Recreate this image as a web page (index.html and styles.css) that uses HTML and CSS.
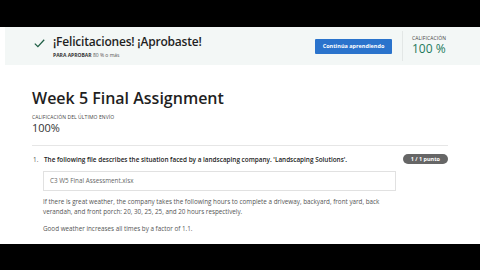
FILE: index.html
```html
<!DOCTYPE html>
<html lang="es">
<head>
    <meta charset="UTF-8">
    <meta name="viewport" content="width=device-width, initial-scale=1.0">
    <title>Week 5 Final Assignment</title>
    <link rel="stylesheet" href="styles.css">
</head>
<body>
    <div class="screen">
        <!-- Passed banner -->
        <div class="banner">
            <svg class="check" width="11" height="9" viewBox="0 0 11 9">
                <path d="M0.8 4.6 L3.9 7.6 L10.2 0.8" fill="none" stroke="#1f5f45" stroke-width="1.3"/>
            </svg>
            <div class="banner-text">
                <div class="banner-title">¡Felicitaciones! ¡Aprobaste!</div>
                <div class="banner-sub"><b>PARA APROBAR</b> 80 % o más</div>
            </div>
            <button class="btn-primary">Continúa aprendiendo</button>
            <div class="grade">
                <div class="label">CALIFICACIÓN</div>
                <div class="grade-value">100 %</div>
            </div>
        </div>

        <div class="main">
            <h1>Week 5 Final Assignment</h1>
            <div class="label">CALIFICACIÓN DEL ÚLTIMO ENVÍO</div>
            <div class="last-grade">100%</div>

            <div class="question">
                <div class="question-head">
                    <span class="num">1.</span>
                    <span class="question-title">The following file describes the situation faced by a landscaping company. 'Landscaping Solutions'.</span>
                    <span class="points">1 / 1 punto</span>
                </div>
                <div class="question-body">
                    <div class="file-box">C3 W5 Final Assessment.xlsx</div>
                    <p>If there is great weather, the company takes the following hours to complete a driveway, backyard, front yard, back verandah, and front porch: 20, 30, 25, 25, and 20 hours respectively.</p>
                    <p>Good weather increases all times by a factor of 1.1.</p>
                </div>
            </div>
        </div>
    </div>
</body>
</html>
```

FILE: styles.css
```css
body {
    margin: 0;
    background-color: #000;
    font-family: 'Open Sans', 'Noto Sans', sans-serif;
    color: #1f1f1f;
}
.screen {
    margin-top: 27px;
    height: 217px;
    background-color: #fff;
    overflow: hidden;
}
.banner {
    display: flex;
    align-items: center;
    height: 38px;
    margin-left: 5px;
    padding-left: 29px;
    background-color: #f3f7f6;
}
.check {
    margin-right: 8px;
    margin-top: -6px;
}
.banner-title {
    font-size: 12px;
    font-weight: 600;
    letter-spacing: -0.2px;
    line-height: 16px;
}
.banner-sub {
    font-size: 5px;
    color: #555;
    margin-top: 2px;
}
.banner-sub b {
    color: #333;
    font-weight: 700;
}
.btn-primary {
    margin-left: auto;
    width: 77px;
    height: 15px;
    padding: 0;
    border: none;
    border-radius: 1px;
    background-color: #2a73cc;
    color: #fff;
    font-family: inherit;
    font-size: 5.5px;
    font-weight: 700;
}
.grade {
    width: 78px;
    height: 30px;
    margin-left: 10px;
    padding: 4px 0 0 9px;
    border-left: 1px solid #e3e7e6;
    box-sizing: border-box;
}
.label {
    font-size: 5px;
    color: #444;
    line-height: 7px;
    letter-spacing: 0.1px;
}
.grade-value {
    font-size: 12px;
    line-height: 13px;
    color: #1d7a5c;
}
.main {
    padding: 0 32px;
}
h1 {
    margin: 23px 0 6px;
    font-size: 16px;
    font-weight: 600;
    line-height: 20px;
}
.last-grade {
    font-size: 11px;
    line-height: 14px;
    color: #333;
    padding-bottom: 10px;
    border-bottom: 1px solid #e6e6e6;
}
.question-head {
    display: flex;
    align-items: center;
    margin-top: 8px;
    font-size: 6.4px;
}
.num {
    width: 11px;
    padding-left: 1px;
    color: #555;
}
.question-title {
    font-weight: 600;
    color: #222;
}
.points {
    margin-left: auto;
    padding: 1px 8px;
    border-radius: 6px;
    background-color: #666;
    color: #fff;
    font-size: 5.5px;
    font-weight: 700;
    line-height: 8px;
}
.question-body {
    padding-left: 11px;
}
.file-box {
    width: 353px;
    height: 20px;
    margin-top: 7px;
    padding-left: 6px;
    box-sizing: border-box;
    border: 1px solid #e1e1e1;
    font-size: 6.3px;
    line-height: 18px;
    color: #666;
}
.question-body p {
    max-width: 340px;
    margin: 6px 0 0;
    font-size: 6.3px;
    line-height: 10px;
    color: #555;
}
.question-body p + p {
    margin-top: 7px;
}
```
